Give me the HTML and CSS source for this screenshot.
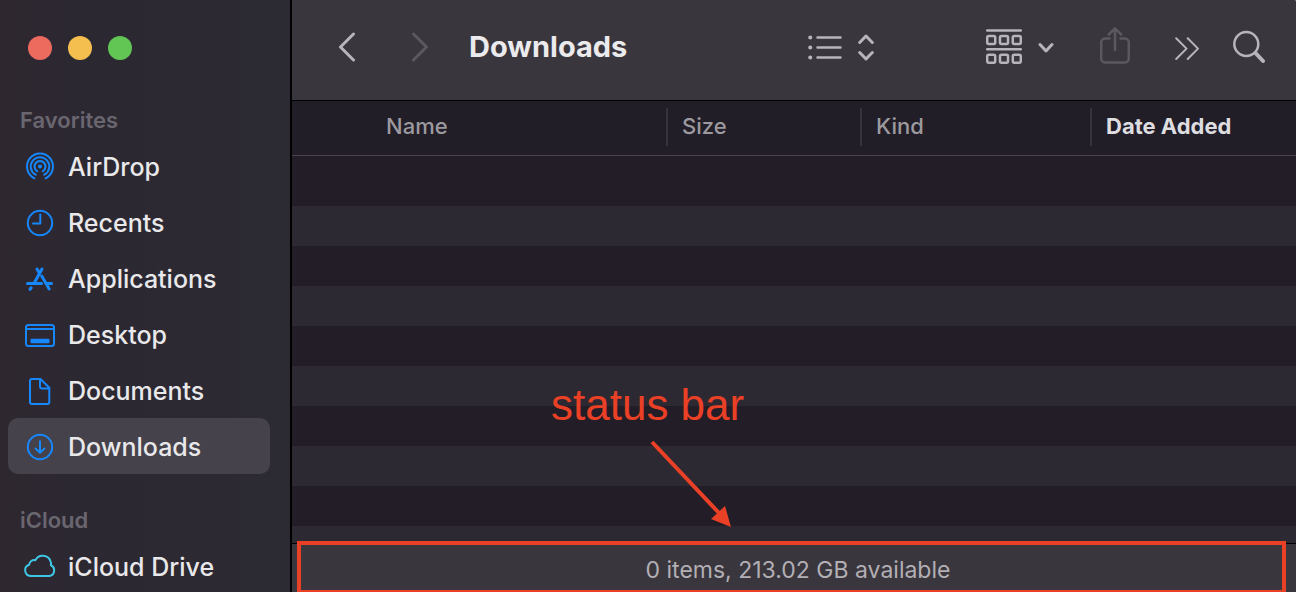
FILE: index.html
```html
<!DOCTYPE html>
<html lang="en">
<head>
<meta charset="utf-8">
<meta name="viewport" content="width=device-width, initial-scale=1">
<title>Downloads</title>
<link rel="stylesheet" href="styles.css">
</head>
<body>
<div class="window">
  <aside class="sidebar">
    <div class="traffic">
      <button class="light light-close" aria-label="Close"></button>
      <button class="light light-minimize" aria-label="Minimize"></button>
      <button class="light light-zoom" aria-label="Zoom"></button>
    </div>
    <nav class="places" aria-label="Places">
      <h2 class="group-title">Favorites</h2>
      <ul class="place-list">
        <li><a class="place" href="#airdrop">
          <svg class="place-icon" viewBox="0 0 32 32" aria-hidden="true"><path d="M10.5 28.3A13 13 0 1 1 21.500 28.3M11.700 24.700A9.300 9.300 0 1 1 20.300 24.700M13.300 21.300A5.500 5.500 0 1 1 18.700 21.300"/><circle class="solid" cx="16" cy="16.500" r="2"/></svg>
          <span class="place-name">AirDrop</span></a></li>
        <li><a class="place" href="#recents">
          <svg class="place-icon" viewBox="0 0 32 32" aria-hidden="true"><circle cx="16" cy="17" r="12.200"/><path d="M16.300 8.500V17.500H9"/></svg>
          <span class="place-name">Recents</span></a></li>
        <li><a class="place" href="#applications">
          <svg class="place-icon" viewBox="0 0 32 32" aria-hidden="true"><path class="thick" d="M18 7L10.500 20.500M13 7L15 10.500M17.700 14L25.200 27M3.500 21.500H17.500M23 21.500H27.500M7.200 25.800L6 27.300"/></svg>
          <span class="place-name">Applications</span></a></li>
        <li><a class="place" href="#desktop">
          <svg class="place-icon" viewBox="0 0 32 32" aria-hidden="true"><rect x="2" y="7" width="28" height="21" rx="2.500"/><path d="M2 11H30"/><rect class="solid" x="6.500" y="20.700" width="19" height="4.600" rx="1"/></svg>
          <span class="place-name">Desktop</span></a></li>
        <li><a class="place" href="#documents">
          <svg class="place-icon" viewBox="0 0 32 32" aria-hidden="true"><path d="M8 5H16.500L25.300 13.800V28A2 2 0 0 1 23.300 30H8A2 2 0 0 1 6 28V7A2 2 0 0 1 8 5ZM16 5V12.500A2 2 0 0 0 18 14.500H25"/></svg>
          <span class="place-name">Documents</span></a></li>
        <li><a class="place place-current" href="#downloads" aria-current="page">
          <svg class="place-icon" viewBox="0 0 32 32" aria-hidden="true"><circle cx="16" cy="17" r="12.200"/><path d="M16 11.300V22M11.500 18.500L16 22.700L20.500 18.500"/></svg>
          <span class="place-name">Downloads</span></a></li>
      </ul>
      <h2 class="group-title group-title-next">iCloud</h2>
      <ul class="place-list">
        <li><a class="place" href="#icloud">
          <svg class="place-icon icon-cloud" viewBox="0 0 32 32" aria-hidden="true"><path d="M6.500 26A5.800 5.800 0 0 1 5.200 14.700A5 5 0 0 1 11.300 10.200A8.300 8.300 0 0 1 26.700 11.700Q27.300 13.500 26.800 15.200A5.700 5.700 0 0 1 25.500 26Z"/></svg>
          <span class="place-name">iCloud Drive</span></a></li>
      </ul>
    </nav>
  </aside>

  <main class="browser">
    <header class="toolbar">
      <div class="history">
        <button class="tool" aria-label="Back"><svg width="18" height="30" viewBox="0 0 18 30" aria-hidden="true"><path class="w3" d="M15.500 2L2.500 15L15.500 28"/></svg></button>
        <button class="tool tool-off" aria-label="Forward" disabled><svg width="18" height="30" viewBox="0 0 18 30" aria-hidden="true"><path class="w3" d="M2.500 2L15.500 15L2.500 28"/></svg></button>
      </div>
      <h1 class="title">Downloads</h1>
      <div class="tools">
        <button class="tool tool-view" aria-label="List view">
          <svg width="34" height="28" viewBox="0 0 34 28" aria-hidden="true"><path class="w25" d="M9.500 4.500H32.500M9.500 14.500H32.500M9.500 24.500H32.500"/><path class="w4" d="M2.200 4.500H2.300M2.200 14.500H2.300M2.200 24.500H2.300"/></svg>
          <svg width="16" height="28" viewBox="0 0 16 28" aria-hidden="true"><path class="w3" d="M1.700 9.500L8 3L14.300 9.500M1.700 19.500L8 26L14.300 19.500"/></svg>
        </button>
        <button class="tool tool-group" aria-label="Group items">
          <svg width="36" height="36" viewBox="0 0 36 36" aria-hidden="true"><path class="w25" d="M1.200 1.500H34.800M1.200 20.300H34.800"/><g class="w25"><rect x="1.200" y="7" width="8" height="8" rx="1.500"/><rect x="14" y="7" width="8" height="8" rx="1.500"/><rect x="26.800" y="7" width="8" height="8" rx="1.500"/><rect x="1.200" y="25.800" width="8" height="8" rx="1.500"/><rect x="14" y="25.800" width="8" height="8" rx="1.500"/><rect x="26.800" y="25.800" width="8" height="8" rx="1.500"/></g></svg>
          <svg width="16" height="12" viewBox="0 0 16 12" aria-hidden="true"><path class="w3" d="M2 3.500L8 10L14 3.500"/></svg>
        </button>
        <button class="tool tool-off tool-share" aria-label="Share" disabled><svg width="30" height="40" viewBox="0 0 30 40" aria-hidden="true"><path class="w25" d="M9.500 11.500H5A4 4 0 0 0 1.200 15.500V31.500A4 4 0 0 0 5 35.500H25A4 4 0 0 0 28.800 31.500V15.500A4 4 0 0 0 25 11.500H20.500M15 23V2M8.800 7.500L15 1.300L21.200 7.500"/></svg></button>
        <button class="tool tool-more" aria-label="More"><svg width="24" height="28" viewBox="0 0 24 28" aria-hidden="true"><path class="w2" d="M1.200 5.300L11.500 15.600L1.200 26M12.700 5.300L23 15.600L12.700 26"/></svg></button>
        <button class="tool" aria-label="Search"><svg width="32" height="34" viewBox="0 0 32 34" aria-hidden="true"><circle class="w25" cx="13.300" cy="14" r="12"/><path class="w4" d="M22.500 23L30 31"/></svg></button>
      </div>
    </header>

    <section class="files">
      <table class="columns">
        <colgroup><col><col class="col-size"><col class="col-kind"><col class="col-date"></colgroup>
        <thead>
          <tr>
            <th class="head-name" scope="col"><span class="head-label">Name</span></th>
            <th scope="col"><span class="head-label head-split">Size</span></th>
            <th scope="col"><span class="head-label head-split">Kind</span></th>
            <th scope="col" aria-sort="descending"><span class="head-label head-split head-sorted">Date Added</span></th>
          </tr>
        </thead>
      </table>
      <div class="stripes"></div>
      <div class="note">
        <p class="note-text">status bar</p>
        <svg class="note-arrow" width="84" height="90" viewBox="0 0 84 90" aria-hidden="true"><path class="note-shaft" d="M4 4L71 75"/><path class="note-head" d="M83 89L77 68L63 81Z"/></svg>
      </div>
    </section>

    <footer class="status">
      <p class="status-text">0 items, 213.02 GB available</p>
      <div class="status-frame"></div>
    </footer>
  </main>
</div>
</body>
</html>
```
FILE: styles.css
```css
* { box-sizing: border-box; }

body {
  margin: 0;
  background: #6b6a6e;
  font-family: Inter, "Liberation Sans", sans-serif;
}

h1, h2, p, ul { margin: 0; padding: 0; }
ul { list-style: none; }

button {
  padding: 0;
  border: 0;
  background: none;
  font: inherit;
}

svg {
  display: block;
  flex: none;
  fill: none;
  stroke: currentColor;
  stroke-linecap: round;
  stroke-linejoin: round;
}

.window {
  display: flex;
  height: 100vh;
  overflow: hidden;
  border-top-right-radius: 4px;
  background: #000;
}

/* Sidebar */
.sidebar {
  flex: none;
  width: 292px;
  border-right: 2px solid #000;
  background: linear-gradient(90deg, #2e2730, #2c2831 25%, #2c2a33);
}

.traffic {
  display: flex;
  gap: 16px;
  padding: 36px 28px 0;
}

.light {
  width: 24px;
  height: 24px;
  border-radius: 50%;
}

.light-close { background: #ed6a5f; }
.light-minimize { background: #f5bf4f; }
.light-zoom { background: #62c655; }

.places { padding: 42px 20px 0 8px; }

.group-title {
  padding: 0 12px;
  color: #6a6670;
  font-size: 22px;
  font-weight: 600;
  line-height: 36px;
}

.group-title-next { padding-top: 28px; }

.place {
  display: flex;
  align-items: center;
  gap: 12px;
  height: 56px;
  padding: 0 16px;
  border-radius: 10px;
  color: #e9e8ea;
  font-size: 25px;
  font-weight: 500;
  line-height: 32px;
  text-decoration: none;
  white-space: nowrap;
}

.place-name { padding-top: 2px; }
.place-current { background: #45424b; }

.place-icon {
  width: 32px;
  height: 32px;
  color: #1787fc;
  stroke-width: 2;
}

.icon-cloud { color: #3fc6e4; }
.thick { stroke-width: 3; }
.solid { fill: currentColor; stroke: none; }

/* Main column */
.browser {
  display: flex;
  flex: 1;
  flex-direction: column;
  min-width: 0;
}

.toolbar {
  display: flex;
  align-items: center;
  height: 101px;
  padding: 0 31px 6px 46px;
  border-bottom: 1px solid #000;
  background: #3a363d;
}

.history {
  display: flex;
  gap: 55px;
}

.title {
  flex: 1;
  padding-left: 40px;
  color: #ebeaec;
  font-size: 29px;
  font-weight: 700;
  line-height: 40px;
}

.tools {
  display: flex;
  align-items: center;
}

.tool {
  display: flex;
  align-items: center;
  gap: 16px;
  color: #b8b4bc;
}

.tool-off { color: #5c5860; }
.tool-view { margin-right: 112px; }
.tool-group { margin-right: 46px; }
.tool-share { margin-right: 45px; }
.tool-more { margin-right: 34px; }

.w2 { stroke-width: 2; }
.w25 { stroke-width: 2.5; }
.w3 { stroke-width: 3; }
.w4 { stroke-width: 4; }

/* File list */
.files {
  position: relative;
  display: flex;
  flex: 1;
  flex-direction: column;
  min-height: 0;
  background: #231d28;
}

.columns {
  width: 100%;
  table-layout: fixed;
  border-collapse: collapse;
}

.col-size { width: 194px; }
.col-kind { width: 230px; }
.col-date { width: 206px; }

.columns thead { background: #221e28; }

.columns th {
  padding: 7px 0 9px;
  border-bottom: 1px solid #49424e;
  color: #9c9a9f;
  font-size: 22px;
  font-weight: 500;
  text-align: left;
}

.columns .head-name { padding-left: 94px; }

.head-label {
  display: block;
  padding-bottom: 2px;
  line-height: 36px;
  white-space: nowrap;
}

.head-split {
  padding-left: 14px;
  border-left: 2px solid #37333c;
}

.head-sorted {
  color: #dedde0;
  font-weight: 700;
}

.stripes {
  flex: 1;
  margin-top: 10px;
  background: repeating-linear-gradient(#231d28 0 40px, #2c2932 40px 80px);
}

/* Annotation drawn over the list */
.note {
  position: absolute;
  bottom: 15px;
  left: 259px;
  color: #ea4025;
}

.note-text {
  font-family: "Liberation Sans", Arial, sans-serif;
  font-size: 44px;
  line-height: 48px;
  white-space: nowrap;
}

.note-arrow { margin: 9px 0 0 97px; }
.note-shaft { stroke-width: 4; stroke-linecap: butt; }
.note-head { fill: currentColor; stroke: none; }

/* Status bar */
.status {
  position: relative;
  padding: 8px 0 4px 8px;
  border-top: 1px solid #000;
  background: #3a363d;
}

.status-text {
  color: #b2afb5;
  font-size: 23px;
  line-height: 36px;
  text-align: center;
}

.status-frame {
  position: absolute;
  inset: -3px 10px -2px 5px;
  border: 4px solid #ea4025;
}
```
